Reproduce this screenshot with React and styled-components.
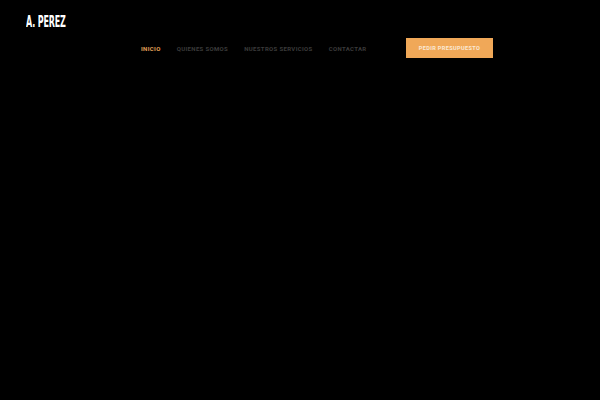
import styled, { createGlobalStyle } from "styled-components";

const Global = createGlobalStyle`
  html, body {
    margin: 0;
    background: #000;
  }
  body {
    font-family: "Roboto", "Liberation Sans", sans-serif;
    width: 600px;
    height: 400px;
    overflow: hidden;
  }
`;

const Page = styled.div`
  width: 600px;
  height: 400px;
  background: #000;
`;

const Header = styled.header`
  display: flex;
  flex-direction: column;
  padding: 13px 0 0 26px;
`;

const Logo = styled.div`
  font-family: "DejaVu Sans Condensed", "Liberation Sans", sans-serif;
  font-weight: 700;
  font-size: 16.5px;
  line-height: 17px;
  color: #fff;
  letter-spacing: -0.3px;
  transform: scaleX(0.54);
  transform-origin: left center;
`;

const Bar = styled.div`
  display: flex;
  align-items: center;
  margin: 8px 0 0 115px;
`;

const Nav = styled.nav`
  display: flex;
  gap: 16px;
`;

const NavItem = styled.a`
  font-size: 6px;
  font-weight: 700;
  letter-spacing: 0.35px;
  text-transform: uppercase;
  color: ${(p) => (p.$active ? "#e4a35a" : "#3b3b3b")};
  text-decoration: none;
`;

const Button = styled.a`
  margin-left: auto;
  margin-right: 107px;
  width: 87px;
  height: 20px;
  display: flex;
  align-items: center;
  justify-content: center;
  background: #f0a858;
  color: #fbe9d4;
  font-size: 5.6px;
  font-weight: 700;
  letter-spacing: 0.35px;
  text-transform: uppercase;
`;

const links = ["Inicio", "Quienes somos", "Nuestros servicios", "Contactar"];

export default function App() {
  return (
    <Page>
      <Global />
      <Header>
        <Logo>A. PEREZ</Logo>
        <Bar>
          <Nav>
            {links.map((l, i) => (
              <NavItem key={l} $active={i === 0}>
                {l}
              </NavItem>
            ))}
          </Nav>
          <Button>Pedir presupuesto</Button>
        </Bar>
      </Header>
    </Page>
  );
}
